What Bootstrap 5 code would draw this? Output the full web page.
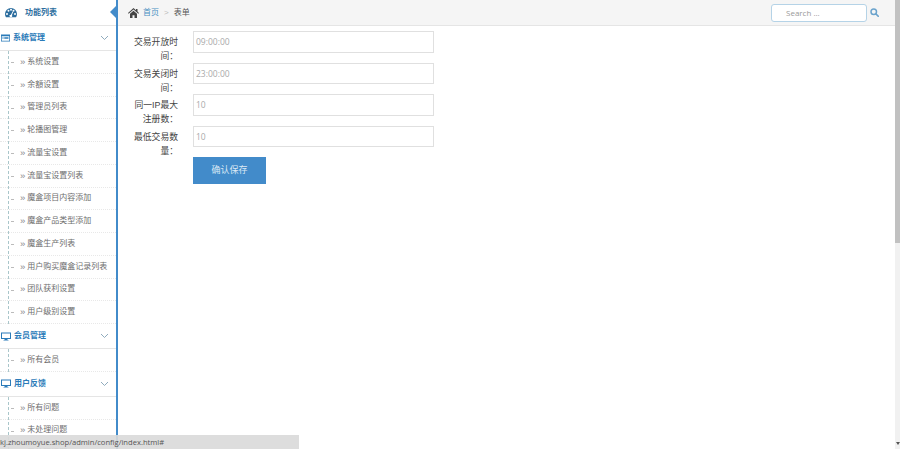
<!DOCTYPE html>
<html lang="zh">
<head>
<meta charset="utf-8">
<title>表单</title>
<link href="https://cdn.jsdelivr.net/npm/bootstrap@5.3.0/dist/css/bootstrap.min.css" rel="stylesheet">
<style>
html,body{height:449px;overflow:hidden;}
body{font-family:"Liberation Sans","Noto Sans CJK SC",sans-serif;font-size:8px;color:#555;background:#fff;position:relative;}
.shell{height:449px;}
.side{width:118px;flex:none;height:449px;overflow:hidden;border-right:2px solid #428bca;background:#fff;position:relative;}
.side-top{height:26px;border-bottom:1px solid #e5e5e5;padding-left:5px;gap:8px;color:#2b6d9e;font-weight:700;font-size:8px;}
.side-top::after{content:"";position:absolute;right:0;top:6px;border:6px solid transparent;border-left:0;border-right-color:#428bca;}
.grp{height:25px;border-bottom:1px solid #e5e5e5;padding:0 7px 0 1px;gap:3px;color:#2b7bb9;font-weight:700;}
.grp svg.chev{margin-left:auto;}
.subs{position:relative;margin:0;padding:0;list-style:none;}
.subs::before{content:"";position:absolute;left:8px;top:0;bottom:0;border-left:1px dashed #a9c6ca;}
.subs li{height:22.75px;border-bottom:1px dotted #e8e8e8;padding-left:20px;position:relative;color:#6e6e6e;white-space:nowrap;display:flex;align-items:center;}
.subs li::before{content:"";position:absolute;left:11px;top:11px;width:3px;border-top:1px solid #bbb;}
.subs li span{margin-right:2px;color:#888;font-size:9.500px;line-height:8px;}
.crumbs{height:26px;background:#f5f5f5;border-bottom:1px solid #e5e5e5;padding:0 16px 0 10px;}
.crumbs .home{margin-right:4px;}
.crumbs a{color:#4a90c2;text-decoration:none;}
.crumbs .sep{color:#bbb;margin:0 5px;}
.crumbs .cur{color:#555;}
.seek{width:96px;height:18px;border:1px solid #b5d3e7;border-radius:3px;background:#fff;color:#999;font-family:"Open Sans",sans-serif;font-size:8px;padding-left:14px;line-height:16px;}
.hunt{gap:3px;}
.pane{flex:1 1 auto;min-width:0;}
.frm{padding:5px 0 0 7px;}
.frow{display:flex;align-items:flex-start;height:31.5px;}
.lbl{width:45px;flex:none;text-align:right;font-size:8.800px;line-height:14px;color:#444;padding-top:4px;margin-left:8px;margin-right:15px;word-break:break-all;}
.fld{width:241px;height:21.5px;min-height:0;border:1px solid #e0e0e0;background:#fff;color:#aaa;font-family:"Open Sans",sans-serif;font-size:8.500px;padding:0 2px;border-radius:0;box-shadow:none;}
.fld[readonly]{background:#fff;}
.save{width:73px;height:27px;background:#428bca;color:#dbe9f5;border:0;border-radius:0;font-size:9px;padding:0;margin-left:68px;display:block;}
.vbar{width:5px;flex:none;background:#f1f1f1;position:relative;}
.vthumb{height:243px;background:#c1c1c1;}
.vbar::after{content:"";position:absolute;left:1px;bottom:4px;border:2px solid transparent;border-bottom:0;border-top:3px solid #555;}
.status{position:absolute;left:0;bottom:0;width:299px;height:14px;background:rgba(217,217,217,.9);color:#555;font-family:"Open Sans",sans-serif;font-size:7.600px;line-height:14px;white-space:nowrap;overflow:hidden;}
</style>
</head>
<body>
<div class="shell d-flex">
  <aside class="side">
    <div class="side-top d-flex align-items-center">
      <svg width="12" height="11" viewBox="0 0 24 22"><path fill="#2b6d9e" d="M12 2A12 12 0 0 0 0 14c0 2.400.7 4.600 1.900 6.500h20.200A12 12 0 0 0 24 14 12 12 0 0 0 12 2zm-8 14a2 2 0 1 1 0-4 2 2 0 0 1 0 4zm3-6.500a2 2 0 1 1 0-4 2 2 0 0 1 0 4zm5-2a2 2 0 1 1 0-4 2 2 0 0 1 0 4zm2.500 11a3 3 0 0 1-5.600-2l3-1 3.500-7 1.500.7-3 7a3 3 0 0 1 .6 2.300zM17 9.500a2 2 0 1 1 0-4 2 2 0 0 1 0 4zm3 6.500a2 2 0 1 1 0-4 2 2 0 0 1 0 4z"/></svg>
      <span>功能列表</span>
    </div>
    <div class="grp d-flex align-items-center">
      <svg width="9" height="8" viewBox="0 0 18 16"><path fill="#2b7bb9" d="M0 1h18v14H0zm1.500 3.500v9h15v-9zM3 6h2v1.500H3zm3.500 0H15v1.500H6.500zM3 8.700h2v1.500H3zm3.500 0H15v1.500H6.500z"/></svg>
      <span>系统管理</span>
      <svg class="chev" width="9" height="6" viewBox="0 0 18 12"><path fill="none" stroke="#8fabbd" stroke-width="2" d="M2 2l7 7 7-7"/></svg>
    </div>
    <ul class="subs">
      <li><span>»</span>系统设置</li>
      <li><span>»</span>余額设置</li>
      <li><span>»</span>管理员列表</li>
      <li><span>»</span>轮播图管理</li>
      <li><span>»</span>流量宝设置</li>
      <li><span>»</span>流量宝设置列表</li>
      <li><span>»</span>魔盒项目内容添加</li>
      <li><span>»</span>魔盒产品类型添加</li>
      <li><span>»</span>魔盒生产列表</li>
      <li><span>»</span>用户购买魔盒记录列表</li>
      <li><span>»</span>团队获利设置</li>
      <li><span>»</span>用户级别设置</li>
    </ul>
    <div class="grp d-flex align-items-center">
      <svg width="10" height="9" viewBox="0 0 20 18"><path fill="#2b7bb9" d="M0 1h20v13h-7v2h2v1H5v-1h2v-2H0zm2 2v9h16V3z"/></svg>
      <span>会员管理</span>
      <svg class="chev" width="9" height="6" viewBox="0 0 18 12"><path fill="none" stroke="#8fabbd" stroke-width="2" d="M2 2l7 7 7-7"/></svg>
    </div>
    <ul class="subs">
      <li><span>»</span>所有会员</li>
    </ul>
    <div class="grp d-flex align-items-center">
      <svg width="10" height="9" viewBox="0 0 20 18"><path fill="#2b7bb9" d="M0 1h20v13h-7v2h2v1H5v-1h2v-2H0zm2 2v9h16V3z"/></svg>
      <span>用户反馈</span>
      <svg class="chev" width="9" height="6" viewBox="0 0 18 12"><path fill="none" stroke="#8fabbd" stroke-width="2" d="M2 2l7 7 7-7"/></svg>
    </div>
    <ul class="subs">
      <li><span>»</span>所有问题</li>
      <li><span>»</span>未处理问题</li>
      <li><span>»</span>已处理问题</li>
    </ul>
  </aside>
  <main class="pane">
    <div class="crumbs d-flex align-items-center">
      <svg class="home" width="11" height="10" viewBox="0 0 22 20"><path fill="#444" d="M11 0l5 4.500V2h3v5.200L22 10l-1.300 1.400L11 2.800 1.300 11.400 0 10zM4 11.500l7-6.200 7 6.200V20h-5v-5.500H9V20H4z"/></svg>
      <a href="#">首页</a><span class="sep">&gt;</span><span class="cur">表单</span>
      <div class="ms-auto d-flex align-items-center hunt">
        <div class="seek">Search ...</div>
        <svg width="9" height="9" viewBox="0 0 18 18"><circle cx="7.500" cy="7.500" r="5.500" fill="none" stroke="#6ba3cc" stroke-width="3"/><path stroke="#6ba3cc" stroke-width="3.500" stroke-linecap="round" d="M12 12l4.500 4.500"/></svg>
      </div>
    </div>
    <form class="frm">
      <div class="frow"><label class="lbl">交易开放时间：</label><input class="form-control fld" value="09:00:00" readonly></div>
      <div class="frow"><label class="lbl">交易关闭时间：</label><input class="form-control fld" value="23:00:00" readonly></div>
      <div class="frow"><label class="lbl">同一IP最大注册数：</label><input class="form-control fld" value="10" readonly></div>
      <div class="frow"><label class="lbl">最低交易数量：</label><input class="form-control fld" value="10" readonly></div>
      <button type="button" class="btn save">确认保存</button>
    </form>
  </main>
  <div class="vbar"><div class="vthumb"></div></div>
</div>
<div class="status">kj.zhoumoyue.shop/admin/config/index.html#</div>
<script src="https://cdn.jsdelivr.net/npm/bootstrap@5.3.0/dist/js/bootstrap.bundle.min.js"></script>
</body>
</html>
